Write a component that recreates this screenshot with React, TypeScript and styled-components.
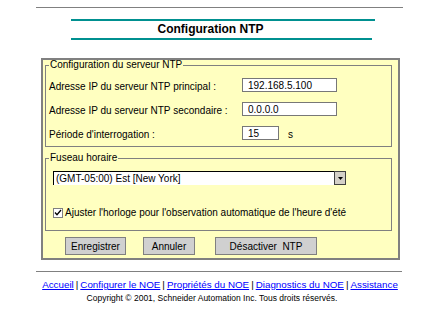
import React, { useState } from 'react';
import styled, { createGlobalStyle } from 'styled-components';

const Global = createGlobalStyle`
body {
  margin: 0;
  background: #ffffff;
  font-family: "Liberation Sans", Arial, sans-serif;
  font-size: 10px;
  color: #000;
}
`

const Page = styled.div`
width: 440px;
padding-top: 7px;
`
const Rule = styled.div<{ $left: number; $width: number; $color?: string; $h?: number }>`
margin-left: ${(p) => p.$left}px;
width: ${(p) => p.$width}px;
height: ${(p) => p.$h ?? 1}px;
background: ${(p) => p.$color ?? '#808080'};
`
const Title = styled.h1`
margin: 1px 0 2px;
padding-right: 19px;
text-align: center;
font-size: 12px;
line-height: 14px;
font-weight: bold;
`
const Panel = styled.div`
margin: 18px 0 0 41px;
width: 359px;
box-sizing: border-box;
border: 2px solid #808080;
background: #ffffc0;
padding: 0 0 3px 2px;
`
const Group = styled.fieldset<{ $top?: number }>`
width: 347px;
box-sizing: border-box;
margin: ${(p) => p.$top ?? 0}px 0 0;
border: 1px solid #808080;
padding: 8px 3px ${(p) => (p.$top ? 12 : 6)}px 3px;
`
const Legend = styled.legend`
padding: 0 1px;
line-height: 10px;
font-size: 10px;
`
const Rows = styled.div`
display: grid;
row-gap: 10px;
`
const Row = styled.div`
display: flex;
align-items: center;
height: 14px;
`
const Label = styled.span`
width: 193px;
padding-top: 2px;
`
const TextInput = styled.input<{ $w: number }>`
width: ${(p) => p.$w}px;
height: 14px;
box-sizing: border-box;
border: 1px solid #777;
background: #fff;
padding: 0 0 0 5px;
font-family: "Liberation Sans", Arial, sans-serif;
font-size: 10px;
outline: none;
`
const Unit = styled.span`
margin-left: 9px;
padding-top: 2px;
`
const Select = styled.div`
display: flex;
margin-left: 4px;
height: 14px;
`
const SelectField = styled.div`
width: 281px;
box-sizing: border-box;
background: #fff;
border-top: 1px solid #000;
border-left: 1px solid #000;
padding: 1px 0 0 2px;
line-height: 12px;
`
const DropButton = styled.div`
width: 12px;
box-sizing: border-box;
border: 1px solid #404040;
background: #d4d0c8;
display: flex;
align-items: center;
justify-content: center;
`
const CheckRow = styled.label`
display: flex;
align-items: center;
margin: 22px 0 0 4px;
height: 11px;
`
const Box = styled.span`
width: 10px;
height: 10px;
box-sizing: border-box;
border: 1px solid #808080;
background: #fff;
margin-right: 2px;
display: flex;
align-items: center;
justify-content: center;
`
const Buttons = styled.div`
display: flex;
margin: 6px 0 0 20px;
gap: 17px;
`
const Button = styled.button<{ $w: number; $gap?: number }>`
width: ${(p) => p.$w}px;
height: 18px;
box-sizing: border-box;
margin-left: ${(p) => p.$gap ?? 0}px;
border: 1px solid #808080;
background: #d0d0d0;
font-family: "Liberation Sans", Arial, sans-serif;
font-size: 10px;
padding: 0;
color: #000;
`
const Footer = styled.div`
margin-top: 11px;
`
const Links = styled.div`
display: flex;
justify-content: center;
gap: 2px;
margin-top: 7px;
line-height: 12px;
font-size: 9.8px;
`
const Link = styled.a`
color: #0000ff;
text-decoration: underline;
`
const Sep = styled.span`
color: #000;
`
const Copyright = styled.div`
margin-top: 2px;
padding-right: 16px;
text-align: center;
font-size: 8.5px;
line-height: 10px;
`

const links = ['Accueil', 'Configurer le NOE', 'Propriétés du NOE', 'Diagnostics du NOE', 'Assistance'];

export default function App() {
  const [dst, setDst] = useState(true);

  return (
    <Page>
      <Global />
      <Rule $left={36} $width={367} />
      <Rule $left={71} $width={304} $color="#009090" $h={2} style={{ marginTop: 11 }} />
      <Title>Configuration NTP</Title>
      <Rule $left={71} $width={301} $color="#009090" $h={2} />

      <Panel>
        <Group>
          <Legend>Configuration du serveur NTP</Legend>
          <Rows>
            <Row>
              <Label>Adresse IP du serveur NTP principal :</Label>
              <TextInput $w={95} defaultValue="192.168.5.100" />
            </Row>
            <Row>
              <Label>Adresse IP du serveur NTP secondaire :</Label>
              <TextInput $w={95} defaultValue="0.0.0.0" />
            </Row>
            <Row>
              <Label>Période d'interrogation :</Label>
              <TextInput $w={37} defaultValue="15" />
              <Unit>s</Unit>
            </Row>
          </Rows>
        </Group>

        <Group $top={6}>
          <Legend>Fuseau horaire</Legend>
          <Select>
            <SelectField>(GMT-05:00) Est [New York]</SelectField>
            <DropButton>
              <svg width="5" height="3" viewBox="0 0 5 3">
                <path d="M0 0h5L2.5 3z" fill="#000" />
              </svg>
            </DropButton>
          </Select>
          <CheckRow onClick={() => setDst(!dst)}>
            <Box>
              {dst && (
                <svg width="8" height="8" viewBox="0 0 8 8">
                  <path d="M1 3.5l2 2.2L7 1" stroke="#000" strokeWidth="1.3" fill="none" />
                </svg>
              )}
            </Box>
            Ajuster l'horloge pour l'observation automatique de l'heure d'été
          </CheckRow>
        </Group>

        <Buttons>
          <Button $w={61}>Enregistrer</Button>
          <Button $w={52}>Annuler</Button>
          <Button $w={102} $gap={3}>Désactiver&nbsp; NTP</Button>
        </Buttons>
      </Panel>

      <Footer>
        <Rule $left={36} $width={366} />
        <Links>
          {links.map((l, i) => (
            <React.Fragment key={l}>
              {i > 0 && <Sep>|</Sep>}
              <Link href="#">{l}</Link>
            </React.Fragment>
          ))}
        </Links>
        <Copyright>Copyright © 2001, Schneider Automation Inc. Tous droits réservés.</Copyright>
      </Footer>
    </Page>
  );
}
